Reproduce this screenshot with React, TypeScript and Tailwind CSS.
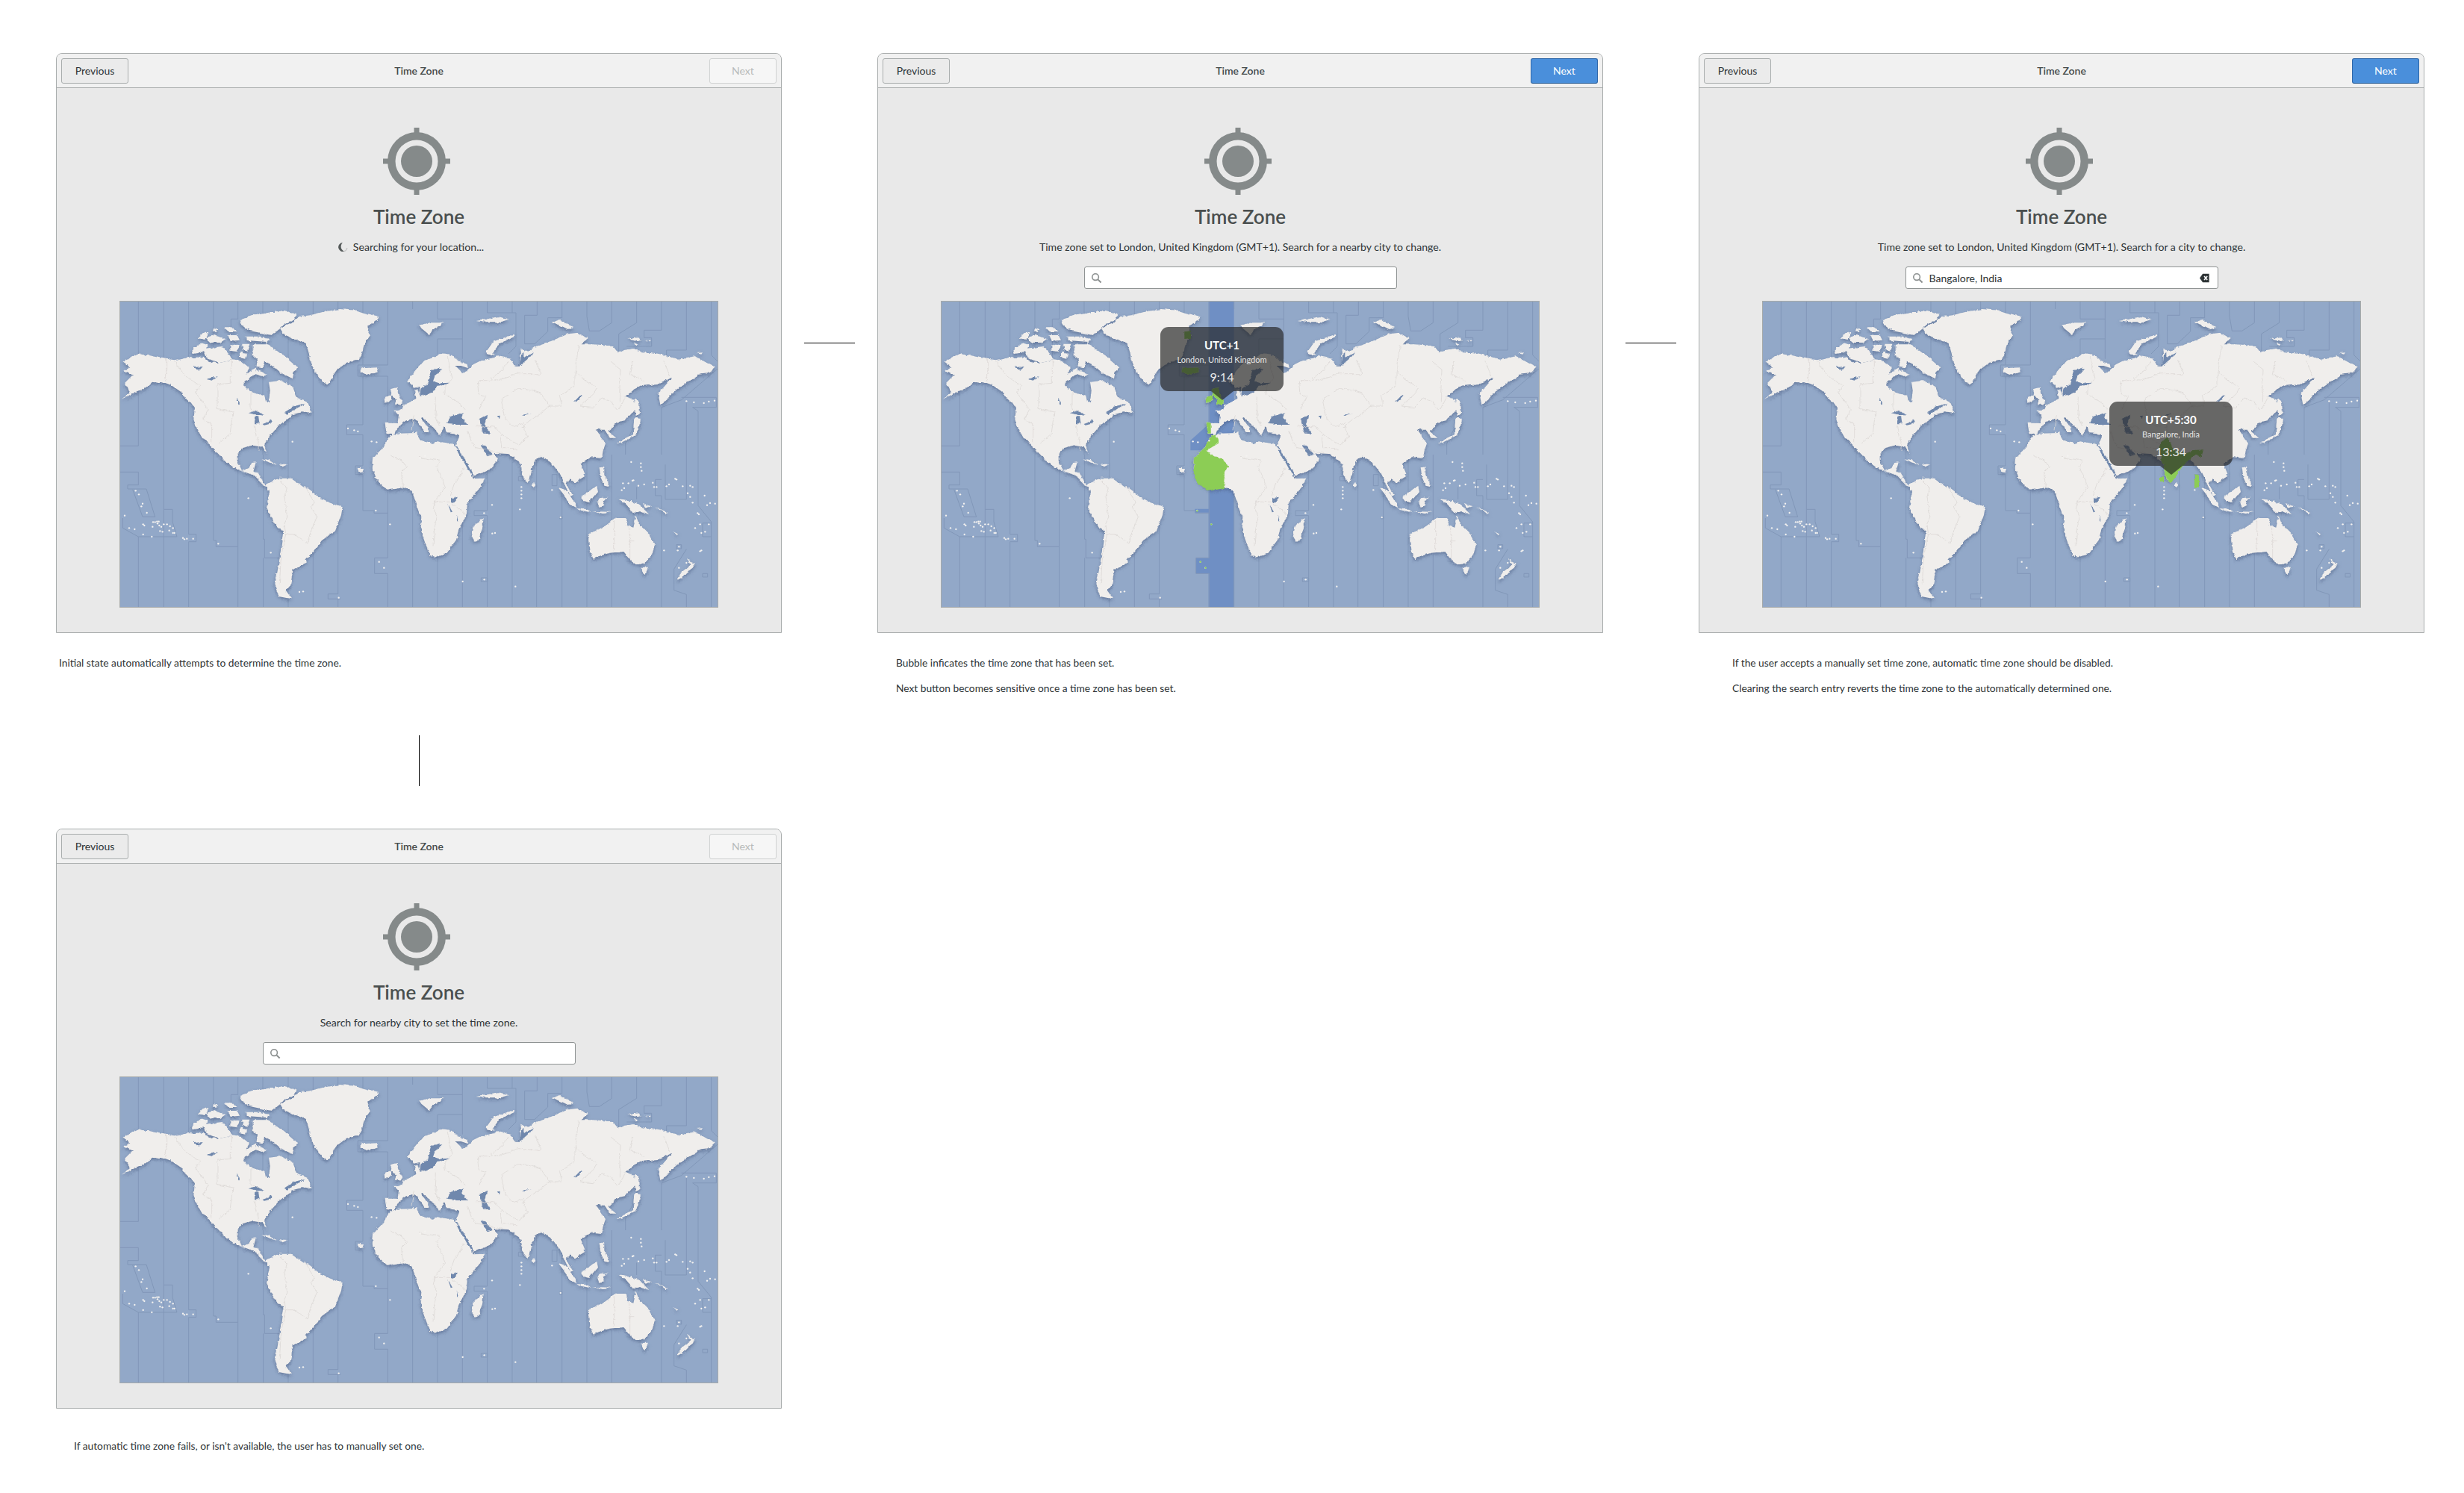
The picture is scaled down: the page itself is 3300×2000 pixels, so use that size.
import React from "react";

const LAND_GLOBAL = [
  // North America
  "10,240 80,208 130,220 185,230 215,235 270,222 340,225 360,240 400,245 450,235 490,240 520,265 505,290 550,265 545,290 500,320 495,340 530,365 580,380 585,405 600,405 605,355 600,320 640,315 690,345 705,385 750,405 770,450 730,445 690,455 660,480 635,500 610,530 578,575 590,620 570,585 530,578 490,588 470,610 470,640 490,680 515,670 528,645 545,643 535,680 555,690 575,725 590,735 605,730 600,745 575,735 540,700 500,685 450,665 420,640 400,615 380,595 345,560 330,555 310,520 295,470 300,430 280,400 240,360 210,340 170,325 130,320 100,345 50,370 5,392 40,365 15,330 45,300 10,280 40,265",
  // South America
  "590,730 640,710 690,710 740,745 780,775 830,800 890,825 885,855 860,925 810,960 775,1005 745,1030 750,1045 695,1080 685,1135 665,1160 690,1195 640,1185 622,1135 640,1035 655,925 620,895 585,830 600,765",
  // Eurasia
  "1064,485 1114,485 1119,460 1099,440 1129,440 1139,415 1189,390 1182,360 1195,355 1202,378 1204,345 1179,350 1161,320 1169,300 1219,240 1284,210 1329,215 1394,250 1399,265 1369,255 1344,255 1374,285 1394,275 1419,255 1449,240 1519,220 1574,230 1589,260 1614,245 1609,185 1639,200 1664,180 1729,160 1800,130 1840,125 1880,150 1850,175 1900,175 1980,180 2000,205 2060,195 2150,210 2240,230 2310,220 2390,265 2370,285 2320,290 2305,310 2240,350 2170,412 2162,370 2218,305 2160,330 2100,335 2060,355 2030,380 2065,395 2070,430 2030,480 1990,490 1960,520 1990,545 1965,545 1945,515 1910,515 1930,545 1950,570 1940,600 1935,630 1890,625 1850,650 1870,700 1830,725 1810,710 1790,730 1815,775 1805,780 1775,715 1760,685 1735,650 1690,620 1670,635 1650,675 1640,730 1625,710 1599,640 1559,615 1504,612 1521,635 1489,670 1414,702 1374,650 1344,585 1364,535 1309,528 1304,500 1284,535 1269,510 1214,465 1209,468 1240,512 1244,525 1224,525 1204,495 1184,475 1149,478 1124,495 1099,535 1069,530",
  // Africa
  "1014,630 1059,578 1084,542 1114,530 1189,528 1204,555 1254,575 1274,562 1339,572 1347,590 1370,620 1395,665 1415,712 1465,710 1440,755 1395,805 1392,855 1360,915 1350,955 1310,1010 1260,1025 1245,1020 1230,975 1205,905 1210,865 1190,810 1170,760 1135,745 1075,755 1030,715 1010,675",
];
const LAND_NW = [
  "640,110 690,85 720,60 760,55 810,42 880,30 950,35 980,45 1040,60 1020,85 990,100 1005,135 985,165 975,210 960,235 910,245 870,275 845,310 830,330 810,320 785,285 765,235 755,200 745,170 690,145 655,130",
  "480,75 530,55 600,40 660,38 710,52 700,70 650,100 640,110 610,135 560,125 510,115 485,95",
  "500,140 560,140 600,150 590,165 520,160",
  "420,100 450,100 470,120 440,120",
  "310,145 330,125 355,125 340,150",
  "340,145 380,135 420,150 400,165 360,165",
  "430,135 470,135 480,155 445,158",
  "285,195 320,165 350,175 340,205 290,210",
  "330,190 410,180 440,215 450,235 400,245 350,225",
  "445,180 480,170 470,205 445,200",
  "490,170 520,170 510,200 490,195",
  "530,175 590,175 630,195 670,225 715,265 695,280 690,310 650,290 610,255 560,230 530,215",
  "480,205 510,210 505,230 480,225",
  "555,225 580,230 575,265 550,260",
  "550,275 590,290 570,300 540,290",
  "965,265 1030,262 1035,280 990,297 965,285",
  "1090,350 1110,345 1125,390 1135,412 1100,420 1105,395 1085,375",
  "1058,385 1085,375 1085,400 1060,405",
  "375,110 395,108 390,122 372,122",
];
const LAND_NE = [
  "268,205 300,160 380,132 385,140 320,170 295,205 305,215 280,212",
  "0,95 40,85 100,85 85,100 60,110 40,135 10,110",
  "230,78 265,72 320,60 360,72 320,85 270,85",
  "535,80 565,70 590,90 625,105 600,115 570,100",
  "835,150 885,145 890,158 860,160",
  "900,155 930,155 925,160",
  "860,170 880,175 870,182",
  "1115,207 1140,205 1135,212",
  "870,385 882,400 885,450 872,460 865,420",
  "795,570 830,545 860,530 865,470 890,470 890,490 870,535 800,570",
];
const LAND_SW = [
  "565,18 600,25 630,40 600,35",
  "635,40 670,42 650,52",
  "950,60 975,60 970,75 955,72",
];
const LAND_SE = [
  "250,260 260,255 255,300 240,340 225,347 212,330 220,290",
  "458,110 468,125 460,132 455,125",
  "560,135 590,145 625,190 630,210 610,200",
  "630,212 680,222 695,232 650,225",
  "700,228 770,230 740,237",
  "652,170 690,145 715,125 720,150 700,175 685,195 660,190",
  "725,175 760,170 740,185 745,205 725,210 718,190",
  "800,178 850,185 895,210 925,240 885,225 860,235 830,200",
  "725,55 745,50 745,85 760,110 765,130 745,125 730,90",
  "680,325 740,290 775,265 795,255 835,255 835,280 865,290 875,245 890,285 925,320 948,360 935,410 905,440 875,440 845,420 820,390 770,395 700,415 685,380",
  "888,455 918,455 905,483 895,478",
  "1080,415 1095,430 1112,435 1100,455 1080,470 1060,495 1035,505 1050,480 1080,455 1090,440",
  "1020,310 1040,320 1035,325",
  "900,195 940,205 910,212",
  "950,210 1000,235 990,238",
];
const SEA_GLOBAL = [
  "515,445 550,435 575,455 540,450",
  "540,460 555,455 560,490 540,490",
  "570,490 610,475 615,485 575,495",
  "465,390 480,418 470,415",
  "295,262 335,258 320,275",
  "345,315 390,300 365,320",
  "660,445 700,420 740,410 700,435 670,450",
  "1204,380 1207,350 1234,328 1249,275 1279,270 1291,275 1261,300 1254,320 1279,328 1324,326 1299,336 1271,338 1254,362 1224,376",
  "1311,492 1324,465 1364,450 1384,445 1371,465 1399,495 1349,495",
  "1439,468 1474,452 1464,490 1489,530 1459,530 1449,495",
  "1589,260 1614,245 1614,210 1624,200 1624,225 1659,205 1639,235 1609,260",
  "1444,580 1464,582 1499,615 1479,622 1462,605",
  "1818,408 1850,375 1855,380 1830,405",
  "1514,460 1526,458 1524,472",
  "1615,460 1650,450 1620,462",
  "1344,582 1354,582 1414,695 1409,702",
  "1335,790 1355,785 1350,805 1335,805",
  "1318,815 1335,845 1328,847",
  "1352,855 1358,880 1353,880",
];
const BORDERS_GLOBAL = [
  "185,230 185,320", "215,240 260,300 320,340 305,360 355,435 335,475 365,490 365,570", "390,330 445,325 445,240",
  "390,330 390,430 455,445 445,530 400,570", "525,360 525,430 555,440", "540,500 555,560 555,600",
  "640,715 670,745 660,785 675,865 660,895 665,935 650,1005 645,1045 640,1135", "740,745 780,805 770,830 790,865 770,915 750,975 700,935 665,935",
  "1315,225 1335,310 1305,340 1305,370 1390,430", "1440,320 1485,320 1560,240", "1435,320 1440,370 1470,380 1440,430",
  "1485,320 1600,290 1695,290 1670,240", "1625,350 1600,350 1530,390 1545,470 1575,500 1620,490", "1625,350 1690,370 1725,420 1615,505",
  "1725,420 1775,420 1765,380 1830,340 1830,290 1840,175", "1840,290 1860,310 1915,345 1900,370 1845,420 1900,425 1935,390 1970,400 2000,440 2030,380",
  "1970,240 2010,270 2005,400", "2060,240 2050,290 2100,320", "2180,240 2205,300", "1620,500 1640,540 1600,575 1530,530 1500,500 1430,500",
  "1530,530 1535,590 1595,590", "1400,520 1425,590 1540,610", "1200,625 1285,640 1275,665 1305,745 1265,800 1255,835 1275,870 1265,915 1260,985",
  "1380,670 1345,735 1330,780", "1260,805 1330,805 1390,860", "1090,615 1155,660 1130,685 1135,745", "1985,885 1985,1000", "2045,905 2045,1035", "2045,965 2065,965",
  "1180,455 1170,520", "1270,380 1265,470 1285,500",
];
const DOTS = [
  [1010,562],[1030,565],[1075,559],[915,510],[940,517],[955,522],[692,563],[1205,628],[1225,620],
  [62,760],[75,775],[90,812],[85,823],[107,849],[18,860],[36,910],[58,915],[92,895],[97,900],[92,936],[127,945],[132,886],[140,886],[148,884],[155,884],[150,892],[157,900],[165,905],[175,895],[188,895],[200,903],[212,910],[130,905],[160,922],[170,925],[197,920],[212,930],[218,930],[252,950],[258,955],[268,953],[293,953],[394,973],[515,790],[605,1009],
  [1027,840],[1084,895],[1040,1046],[1060,1070],[720,1167],[735,1165],[878,1190],
  [1494,817],[1462,850],[1506,930],[1495,932],[1376,1125],[1463,1117],[1588,1145],[1606,835],[1769,867],[1735,757],[1612,745],[1612,760],[1612,775],[1612,790],[2185,1000],[2245,985],
  [2053,645],[2092,650],[2092,665],[2095,680],[2020,730],[2042,730],[2058,720],[2062,718],[2082,740],[2105,735],[2140,728],[2145,745],[2155,745],[2195,742],[2205,735],[2230,712],[2235,715],[2260,742],[2290,740],[2300,745],[2280,770],[2290,785],[2300,808],[2348,780],[2358,818],[2370,810],[2390,812],[2320,850],[2325,855],[2310,910],[2330,895],[2335,930],[2350,925],[2365,895],[2335,1000],[2330,1003],[2245,1070],[2275,1050],[2015,758],[2025,750],
  [2275,400],[2305,405],[2345,408],[2365,402],[2388,398],[2240,1000],
];
const TZ_NW = "M73 0V580H0M175 0V615M275 0V615M375 0V615M473 0V70H445V245M573 0V615M675 0V615M775 0V615M875 0V615M975 0V255H955V300H975V495H910V535H975V615M1075 0V255H975M1075 300H975M1075 300V615M1175 0V30";
const TZ_NE = "M75 0V70H175M75 150H175M75 150V210M175 0V230M275 0V45H390V180L360 210M375 0V45M475 0V55H425V170H465L518 120V65H575V0M675 0V60L685 118H725L775 85V0M875 0V85L803 130V210M975 0V115H905V145H935V180H835M1075 0V195H995V230M1200 240L1175 215V0M1200 270L1055 395L975 425V615M1055 385H1195V425H1100L1122 440V615M1075 405V615M875 440V480L830 570V615";
const TZ_SW = "M0 70H73V122H30V138H105L140 250H90L50 140M10 255V295L73 330V615M73 330H228L210 270V220H175M175 0V330M175 330V615M275 0V320H305V350H275V615M375 0V345H385V370H473V0M473 370V615M575 0V340H580V415H650M575 415V615M675 0V615M775 0V615M875 0V560H835V580H885M875 580V615M975 0V45H945V80H975V225H1020V235H1075V140M1075 235V415H1022V478H1075V615M1175 0V615";
const TZ_SE = "M75 0V615M175 0V615M275 0V225H222V245H275V615M275 80V95H270V80ZM375 0V615M400 88H418V105H400ZM473 0V615M535 80H555V125H535ZM575 0V615M675 0V615M775 0V615M875 130V180M975 100H950V165H975V615M990 40V180H1075V0M1122 0V205L1175 270V330H1140V275H1175M1075 380L1025 460V545L1075 562V615M1175 330V615M250 495H275V510H250ZM1035 362H1055V378H1035ZM1140 478H1160V492H1140ZM566 248H576V258H566Z";

const GREEN_LONDON = [
  "1090,350 1110,345 1125,390 1135,412 1100,420 1105,395 1085,375",
  "1058,385 1085,375 1085,400 1060,405",
  "1064,485 1085,485 1085,530 1069,530",
  "1105,535 1116,568 1065,598 1137,643 1153,658 1137,688 1134,748 1073,758 1026,723 1010,688 1014,630 1059,578 1084,542",
  "965,265 1030,262 1035,280 990,297 965,285",
  "973,118 1002,115 1002,150 973,153",
];
const GREEN_INDIA = [
  "1640,730 1625,710 1599,640 1590,595 1600,560 1629,543 1640,575 1650,600 1700,610 1725,600 1767,598 1760,625 1735,615 1706,640 1683,663 1665,690",
  "1734,698 1749,698 1749,746 1734,746",
  "1596,706 1614,706 1614,723 1596,723",
];

function Polys({ pts, fill }: { pts: string[]; fill: string }) {
  return (
    <>
      {pts.map((p, i) => (
        <polygon key={i} points={p} fill={fill} />
      ))}
    </>
  );
}

function WorldMap({ zone, children }: { zone?: "london" | "india"; children?: React.ReactNode }) {
  return (
    <div className="relative w-[802px] h-[411px] shrink-0 border border-[#a6aaaa]">
      <svg viewBox="0 0 2400 1227" preserveAspectRatio="none" className="block w-full h-full bg-[#92a8c8]">
        <defs>
          <filter id="landshadow" x="-5%" y="-5%" width="110%" height="110%" colorInterpolationFilters="sRGB">
            <feDropShadow dx="0" dy="7" stdDeviation="7" floodColor="#41547a" floodOpacity="0.55" />
          </filter>
          <filter id="coast" filterUnits="userSpaceOnUse" x="0" y="0" width="2400" height="1227" colorInterpolationFilters="sRGB">
            <feTurbulence type="fractalNoise" baseFrequency="0.014" numOctaves="2" seed="4" result="low" />
            <feTurbulence type="fractalNoise" baseFrequency="0.1" numOctaves="2" seed="9" result="high" />
            <feDisplacementMap in="SourceGraphic" in2="low" scale="16" xChannelSelector="R" yChannelSelector="G" result="a" />
            <feDisplacementMap in="a" in2="high" scale="9" xChannelSelector="G" yChannelSelector="B" />
          </filter>
        </defs>
        {zone === "london" && (
          <path d="M1073 0H1175V1233H1073V1093H1023V1030H1073V848H1018V833H1073V598H1000V558L1073 493Z" fill="#6f8fc4" />
        )}
        <g fill="none" stroke="#8197b8" strokeWidth="3">
          <path d={TZ_NW} />
          <path d={TZ_NE} transform="translate(1200 0)" />
          <path d={TZ_SW} transform="translate(0 615)" />
          <path d={TZ_SE} transform="translate(1200 615)" />
        </g>
        <g filter="url(#coast)">
          <g filter="url(#landshadow)">
            <Polys pts={LAND_GLOBAL} fill="#f0eeec" />
            <Polys pts={LAND_NW} fill="#f0eeec" />
            <g transform="translate(1200 0)"><Polys pts={LAND_NE} fill="#f0eeec" /></g>
            <g transform="translate(0 615)"><Polys pts={LAND_SW} fill="#f0eeec" /></g>
            <g transform="translate(1200 615)"><Polys pts={LAND_SE} fill="#f0eeec" /></g>
          </g>
          <Polys pts={SEA_GLOBAL} fill="#7088ad" />
          <g fill="none" stroke="#dcd9d6" strokeWidth="2.5">
            {BORDERS_GLOBAL.map((p, i) => (
              <polyline key={i} points={p} />
            ))}
          </g>
          {zone === "london" && <Polys pts={GREEN_LONDON} fill="#8ccd55" />}
          {zone === "india" && <Polys pts={GREEN_INDIA} fill="#8ccd55" />}
        </g>
        {DOTS.map(([x, y], i) => (
          <circle key={i} cx={x} cy={y} r="3.5" fill="#f4f2f0" />
        ))}
        {zone === "london" && [[1027, 841], [1084, 895], [1040, 1046], [1061, 1070]].map(([x, y], i) => (
          <circle key={i} cx={x} cy={y} r="3.5" fill="#8ccd55" />
        ))}
      </svg>
      {children}
    </div>
  );
}

function Bubble({ className, tz, city, time }: { className: string; tz: string; city: string; time: string }) {
  return (
    <div className={`absolute w-[165px] h-[86px] rounded-[11px] bg-[#242424ab] flex flex-col items-center text-white ${className}`}>
      <span className="mt-[14px] h-[20px] leading-[20px] text-[15px] font-bold">{tz}</span>
      <span className="mt-[1px] h-[17px] leading-[17px] text-[11px] text-[#e4e4e4]">{city}</span>
      <span className="mt-[4px] h-[22px] leading-[22px] text-[16px] text-[#e8e8e8]">{time}</span>
      <span className="absolute top-full left-1/2 -translate-x-1/2 w-0 h-0 border-x-[15px] border-x-transparent border-t-[12px] border-t-[#242424ab]" />
    </div>
  );
}

function TargetIcon() {
  return (
    <svg viewBox="0 0 90 90" className="block w-[90px] h-[90px] -translate-x-[3px]">
      <rect x="41.5" y="0" width="7" height="90" fill="#858a8a" />
      <rect x="0" y="41.5" width="90" height="7" fill="#858a8a" />
      <circle cx="45" cy="45" r="39" fill="#858a8a" />
      <circle cx="45" cy="45" r="28.5" fill="#e9e9e9" />
      <circle cx="45" cy="45" r="21" fill="#858a8a" />
    </svg>
  );
}

function SearchIcon() {
  return (
    <svg viewBox="0 0 16 16" className="w-[15px] h-[15px] shrink-0" fill="none" stroke="#8d9191" strokeWidth="1.7">
      <circle cx="6.5" cy="6.5" r="4.6" />
      <path d="M10 10l4.5 4.5" strokeWidth="2.2" />
    </svg>
  );
}

function ClearIcon() {
  return (
    <svg viewBox="0 0 17 16" className="w-[17px] h-[13px] shrink-0">
      <path d="M5.5 1H16v14H5.5L0.5 8Z" fill="#2e3436" />
      <path d="M8 5l5 6M13 5l-5 6" stroke="#ffffff" strokeWidth="2" />
    </svg>
  );
}

function SearchBox({ value, clear }: { value?: string; clear?: boolean }) {
  return (
    <div className="w-[419px] h-[30px] flex items-center gap-[8px] pl-[8px] pr-[9px] bg-white border border-[#8f9393] rounded-[3px] text-[14px] text-[#2e3436]">
      <SearchIcon />
      <span className="flex-1">{value}</span>
      {clear && <ClearIcon />}
    </div>
  );
}

function Spinner() {
  return (
    <svg viewBox="0 0 14 14" className="w-[14px] h-[14px]">
      <path d="M7 1A6 6 0 1 0 9 12.7A7 7 0 0 1 7 1Z" fill="#555a5a" />
      <path d="M9 12.7A6 6 0 0 0 12.8 8" fill="none" stroke="#c8c8c8" strokeWidth="1.5" />
    </svg>
  );
}

function Win({ ready, subtitle, search, children }: { ready?: boolean; subtitle: React.ReactNode; search?: React.ReactNode; children: React.ReactNode }) {
  return (
    <div className="w-[972px] h-[777px] shrink-0 flex flex-col border border-[#a9adad] rounded-t-[8px] bg-[#e9e9e9] overflow-hidden">
      <div className="h-[46px] shrink-0 flex items-center justify-between px-[6px] bg-[#f1f1f1] border-b border-[#a9adad] text-[14px]">
        <button className="w-[90px] h-[34px] rounded-[3px] border border-[#a9adad] bg-[#ebebeb] text-[#2e3436]">Previous</button>
        <span className="font-semibold text-[#444a4a]">Time Zone</span>
        {ready ? (
          <button className="w-[90px] h-[34px] rounded-[3px] border border-[#2e66a8] border-b-[#1f5590] bg-[#4a8fdb] text-white">Next</button>
        ) : (
          <button className="w-[90px] h-[34px] rounded-[3px] border border-[#d0d2d2] bg-[#f6f6f6] text-[#b8bbbb]">Next</button>
        )}
      </div>
      <div className="flex-1 flex flex-col items-center">
        <div className="mt-[53px]"><TargetIcon /></div>
        <h1 className="mt-[13px] h-[32px] leading-[32px] text-[26px] font-semibold text-[#4a4f4f]">Time Zone</h1>
        <div className="mt-[15px] h-[20px] leading-[20px] flex items-center gap-[7px] text-[14.1px] text-[#2e3436]">{subtitle}</div>
        <div className="mt-[16px] h-[30px]">{search}</div>
        <div className="mt-[16px]">{children}</div>
      </div>
    </div>
  );
}

function Caption({ className, lines }: { className: string; lines: string[] }) {
  return (
    <div className={`w-[972px] flex flex-col gap-[14px] text-[13.75px] leading-[20px] text-[#2e3436] ${className}`}>
      {lines.map((l) => (
        <p key={l}>{l}</p>
      ))}
    </div>
  );
}

function HLine() {
  return (
    <div className="w-[128px] flex justify-center shrink-0">
      <div className="w-[68px] h-px bg-black" />
    </div>
  );
}

export default function App() {
  return (
    <div className="w-[3300px] h-[2000px] bg-white pl-[75px] pt-[71px] font-['Lato','Liberation_Sans',sans-serif]">
      <div className="flex items-center">
        <Win subtitle={<div className="flex items-center gap-[7px] mr-[22px]"><Spinner /><span>Searching for your location...</span></div>}>
          <WorldMap />
        </Win>
        <HLine />
        <Win ready subtitle={<span>Time zone set to London, United Kingdom (GMT+1). Search for a nearby city to change.</span>} search={<SearchBox />}>
          <WorldMap zone="london">
            <Bubble className="left-[293px] top-[34px]" tz="UTC+1" city="London, United Kingdom" time="9:14" />
          </WorldMap>
        </Win>
        <HLine />
        <Win ready subtitle={<span>Time zone set to London, United Kingdom (GMT+1). Search for a city to change.</span>} search={<SearchBox value="Bangalore, India" clear />}>
          <WorldMap zone="india">
            <Bubble className="left-[464px] top-[134px]" tz="UTC+5:30" city="Bangalore, India" time="13:34" />
          </WorldMap>
        </Win>
      </div>
      <div className="flex mt-[30px] h-[107px]">
        <Caption className="pl-[4px]" lines={["Initial state automatically attempts to determine the time zone."]} />
        <div className="w-[128px] shrink-0" />
        <Caption className="pl-[25px]" lines={["Bubble inficates the time zone that has been set.", "Next button becomes sensitive once a time zone has been set."]} />
        <div className="w-[128px] shrink-0" />
        <Caption className="pl-[45px]" lines={["If the user accepts a manually set time zone, automatic time zone should be disabled.", "Clearing the search entry reverts the time zone to the automatically determined one."]} />
      </div>
      <div className="w-[972px] flex justify-center">
        <div className="w-px h-[68px] bg-black" />
      </div>
      <div className="mt-[57px]">
        <Win subtitle={<span>Search for nearby city to set the time zone.</span>} search={<SearchBox />}>
          <WorldMap />
        </Win>
      </div>
      <Caption className="pl-[24px] mt-[40px]" lines={["If automatic time zone fails, or isn't available, the user has to manually set one."]} />
    </div>
  );
}
